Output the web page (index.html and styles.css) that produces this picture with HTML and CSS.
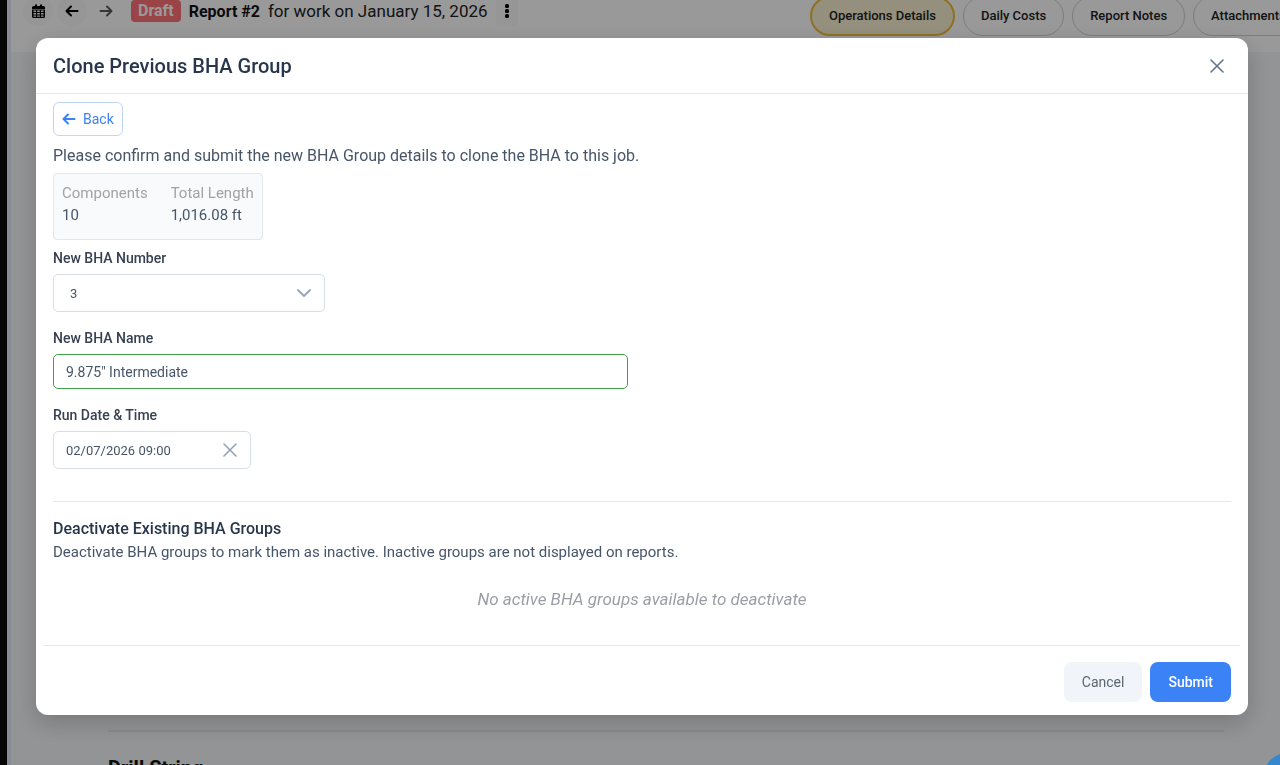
FILE: index.html
```
<!DOCTYPE html>
<html lang="en">
<head>
    <meta charset="UTF-8">
    <meta name="viewport" content="width=device-width, initial-scale=1.0">
    <title>Clone Previous BHA Group</title>
    <link rel="stylesheet" href="styles.css">
</head>
<body>
    <div class="page">
        <div class="sidebar"></div>

        <main class="content">
            <header class="topbar">
                <div class="report-nav">
                    <button type="button" class="icon-button" aria-label="Calendar">
                        <svg width="13" height="15" viewBox="0 0 13 15" fill="#000">
                            <path fill-rule="evenodd" d="M3 0.500h2V2h3V0.500h2V2h1.500A1.500 1.500 0 0 1 13 3.500V5H0V3.500A1.500 1.500 0 0 1 1.500 2H3zM0 5.500H13V12.500A1.500 1.500 0 0 1 11.500 14H1.500A1.500 1.500 0 0 1 0 12.500zM1.500 6.500V8H4V6.500zM5.200 6.500V8H7.800V6.500zM9 6.500V8H11.500V6.500zM1.500 9V10.500H4V9zM5.200 9V10.500H7.800V9zM9 9V10.500H11.500V9zM1.500 11.500V12.700H4V11.500zM5.200 11.500V12.700H7.800V11.500zM9 11.500V12.700H11.500V11.500z"/>
                        </svg>
                    </button>
                    <button type="button" class="icon-button" aria-label="Previous report">
                        <svg width="14" height="14" viewBox="0 0 14 14" fill="none" stroke="#000" stroke-width="2" stroke-linecap="round" stroke-linejoin="round">
                            <path d="M12.500 7H2M6 2.500L1.500 7 6 11.500"/>
                        </svg>
                    </button>
                    <button type="button" class="icon-button muted" aria-label="Next report">
                        <svg width="14" height="14" viewBox="0 0 14 14" fill="none" stroke="#5a5a5a" stroke-width="2" stroke-linecap="round" stroke-linejoin="round">
                            <path d="M1.500 7H12M8 2.500L12.500 7 8 11.500"/>
                        </svg>
                    </button>
                    <span class="badge">Draft</span>
                    <strong class="report-title">Report #2</strong>
                    <span class="report-date">for work on January 15, 2026</span>
                    <button type="button" class="icon-button more" aria-label="More">
                        <svg width="4" height="16" viewBox="0 0 4 16" fill="#000">
                            <rect x="0" y="1" width="4" height="4" rx="1.500"/>
                            <rect x="0" y="6" width="4" height="4" rx="1.500"/>
                            <rect x="0" y="11" width="4" height="4" rx="1.500"/>
                        </svg>
                    </button>
                </div>
                <nav class="tabs">
                    <a href="#operations" class="tab active">Operations Details</a>
                    <a href="#costs" class="tab">Daily Costs</a>
                    <a href="#notes" class="tab">Report Notes</a>
                    <a href="#attachments" class="tab">Attachments</a>
                </nav>
            </header>

            <section class="report-section">
                <h2>Drill String</h2>
            </section>
        </main>
    </div>

    <div class="overlay">
        <div class="modal" role="dialog" aria-labelledby="modalTitle">
            <div class="modal-header">
                <h1 id="modalTitle">Clone Previous BHA Group</h1>
                <button type="button" class="close-button" aria-label="Close">
                    <svg width="14" height="14" viewBox="0 0 14 14" fill="none" stroke="#64748b" stroke-width="1.600" stroke-linecap="round">
                        <path d="M1 1l12 12M13 1L1 13"/>
                    </svg>
                </button>
            </div>

            <form class="modal-form">
                <div class="modal-body">
                    <button type="button" class="back-button">
                        <svg width="14" height="14" viewBox="0 0 14 14" fill="none" stroke="#3b82f6" stroke-width="2" stroke-linecap="round" stroke-linejoin="round">
                            <path d="M12.500 7H2M6 2.500L1.500 7 6 11.500"/>
                        </svg>
                        Back
                    </button>

                    <p class="intro">Please confirm and submit the new BHA Group details to clone the BHA to this job.</p>

                    <dl class="summary">
                        <div>
                            <dt>Components</dt>
                            <dd>10</dd>
                        </div>
                        <div>
                            <dt>Total Length</dt>
                            <dd>1,016.08 ft</dd>
                        </div>
                    </dl>

                    <div class="form-group">
                        <label for="bhaNumber">New BHA Number</label>
                        <div class="select-box">
                            <select id="bhaNumber">
                                <option value="3" selected>3</option>
                                <option value="4">4</option>
                            </select>
                            <svg class="field-icon" width="14" height="8" viewBox="0 0 14 8" fill="none" stroke="#94a3b8" stroke-width="1.800" stroke-linecap="round" stroke-linejoin="round">
                                <path d="M1 1l6 6 6-6"/>
                            </svg>
                        </div>
                    </div>

                    <div class="form-group">
                        <label for="bhaName">New BHA Name</label>
                        <input type="text" id="bhaName" class="name-input" value="9.875&quot; Intermediate">
                    </div>

                    <div class="form-group">
                        <label for="runDate">Run Date &amp; Time</label>
                        <div class="date-box">
                            <input type="text" id="runDate" value="02/07/2026 09:00">
                            <button type="button" class="field-icon" aria-label="Clear date">
                                <svg width="14" height="14" viewBox="0 0 14 14" fill="none" stroke="#94a3b8" stroke-width="1.600" stroke-linecap="round">
                                    <path d="M1 1l12 12M13 1L1 13"/>
                                </svg>
                            </button>
                        </div>
                    </div>

                    <div class="deactivate">
                        <h2>Deactivate Existing BHA Groups</h2>
                        <p>Deactivate BHA groups to mark them as inactive. Inactive groups are not displayed on reports.</p>
                        <p class="empty">No active BHA groups available to deactivate</p>
                    </div>
                </div>

                <div class="modal-footer">
                    <button type="button" class="cancel-button">Cancel</button>
                    <button type="submit" class="submit-button">Submit</button>
                </div>
            </form>
        </div>
    </div>

    <button type="button" class="chat-button" aria-label="Chat"></button>
</body>
</html>
```

FILE: styles.css
```
* {
    box-sizing: border-box;
}

body {
    margin: 0;
    font-family: Roboto, "Liberation Sans", sans-serif;
    font-size: 16px;
    color: #475569;
    overflow: hidden;
}

h1, h2, p, dl, dd {
    margin: 0;
}

button, input, select {
    font-family: inherit;
}

button {
    padding: 0;
    border: none;
    cursor: pointer;
}

svg {
    display: block;
}

/* Page behind the modal */
.page {
    display: flex;
    height: 100vh;
    overflow: hidden;
}

.sidebar {
    flex: none;
    width: 7px;
    background-color: #0a0a0a;
}

.content {
    flex: 1;
    min-width: 0;
    display: flex;
    flex-direction: column;
    justify-content: space-between;
    border-left: 4px solid #e4ebf5;
    background-color: #f5f7fa;
}

.topbar {
    display: flex;
    justify-content: space-between;
    height: 52px;
    padding-left: 12px;
    background-color: #fff;
    overflow: hidden;
}

.report-nav {
    display: flex;
    align-items: center;
    height: 22px;
    color: #222;
    white-space: nowrap;
}

.icon-button {
    display: flex;
    align-items: center;
    justify-content: center;
    flex: none;
    width: 30px;
    height: 30px;
    margin-right: 4px;
    border-radius: 50%;
    background-color: #fafafa;
}

.icon-button.muted {
    background-color: transparent;
}

.icon-button.more {
    width: 22px;
    margin: 0 0 0 8px;
    border-radius: 4px;
}

.badge {
    height: 22px;
    margin: 0 8px 0 6px;
    padding: 0 7px;
    border-radius: 4px;
    background-color: #ff7276;
    color: #fff;
    font-weight: bold;
    line-height: 22px;
}

.report-title {
    margin-right: 8px;
    color: #111;
}

.report-date {
    font-size: 17px;
}

.tabs {
    display: flex;
    gap: 8px;
    width: 470px;
    margin-top: -4px;
}

.tab {
    flex: none;
    height: 40px;
    padding: 0 17px;
    border: 1px solid #d0d0d0;
    border-radius: 20px;
    color: #222;
    font-size: 13px;
    font-weight: 500;
    line-height: 38px;
    text-decoration: none;
}

.tab.active {
    border: 2px solid #f0bc38;
    background-color: #f8efd0;
    line-height: 36px;
}

.report-section {
    height: 35px;
    margin: 0 56px 0 97px;
    border-top: 2px solid #e4e6e9;
    overflow: hidden;
}

.report-section h2 {
    padding-top: 24px;
    color: #111;
    font-size: 20px;
    line-height: 24px;
}

.chat-button {
    position: fixed;
    right: -38px;
    bottom: -43px;
    width: 56px;
    height: 56px;
    border-radius: 50%;
    background-color: #3588d0;
}

/* Modal */
.overlay {
    position: fixed;
    inset: 0;
    display: flex;
    align-items: flex-start;
    padding: 38px 32px 0 36px;
    background-color: rgba(0, 0, 0, 0.4);
}

.modal {
    flex: 1;
    min-width: 0;
    border-radius: 12px;
    background-color: #fff;
    box-shadow: 0 8px 24px rgba(0, 0, 0, 0.2);
}

.modal-header {
    display: flex;
    align-items: center;
    justify-content: space-between;
    height: 56px;
    padding: 0 24px 0 17px;
    border-bottom: 1px solid #e5e7eb;
}

.modal-header h1 {
    color: #27364b;
    font-size: 20px;
    font-weight: 500;
}

.close-button {
    background: none;
}

.modal-body {
    padding: 8px 17px 0;
}

.back-button {
    display: flex;
    align-items: center;
    gap: 7px;
    height: 34px;
    padding: 0 8px;
    border: 1px solid #bfd5fb;
    border-radius: 6px;
    background-color: #fff;
    color: #3b82f6;
    font-size: 14px;
}

.intro {
    margin-top: 8px;
    line-height: 24px;
}

.summary {
    display: flex;
    gap: 23px;
    width: fit-content;
    height: 67px;
    margin-top: 5px;
    padding: 8px;
    border: 1px solid #e2e5ea;
    border-radius: 4px;
    background-color: #f8fafc;
    font-size: 15px;
    line-height: 22px;
}

.summary dt {
    color: #a0a3a8;
}

.form-group label {
    display: block;
    margin-bottom: 6px;
    color: #374151;
    font-size: 14px;
    font-weight: 500;
    line-height: 20px;
}

.summary + .form-group {
    margin-top: 8px;
}

.form-group + .form-group {
    margin-top: 16px;
}

.form-group input, .form-group select {
    display: block;
    width: 100%;
    height: 38px;
    padding: 0 12px;
    border: 1px solid #d8dee6;
    border-radius: 5px;
    background-color: #fff;
    color: #475569;
    font-size: 13px;
}

.form-group select {
    padding: 0 16px;
    appearance: none;
}

.form-group .name-input {
    width: 575px;
    max-width: 100%;
    height: 35px;
    border-color: #43a047;
    font-size: 14px;
}

.select-box, .date-box {
    position: relative;
    width: 272px;
}

.date-box {
    width: 198px;
}

.field-icon {
    position: absolute;
    top: 0;
    right: 14px;
    height: 38px;
    background: none;
    pointer-events: none;
}

.deactivate {
    margin-top: 32px;
    padding-top: 17px;
    border-top: 1px solid #e5e7eb;
}

.deactivate h2 {
    color: #27364b;
    font-size: 16px;
    font-weight: 500;
    line-height: 20px;
}

.deactivate p {
    margin-top: 3px;
    font-size: 15px;
    line-height: 20px;
}

.deactivate .empty {
    margin-top: 25px;
    color: #9b9fa5;
    font-size: 17px;
    font-style: italic;
    line-height: 24px;
    text-align: center;
}

.modal-footer {
    display: flex;
    justify-content: flex-end;
    gap: 8px;
    margin: 34px 8px 0;
    padding: 16px 9px 13px;
    border-top: 1px solid #e5e7eb;
}

.modal-footer button {
    height: 40px;
    padding: 0 18px;
    border-radius: 8px;
    font-size: 14px;
}

.modal-footer .cancel-button {
    background-color: #f1f5f9;
    color: #596674;
}

.modal-footer .submit-button {
    background-color: #3b82f6;
    color: #fff;
    font-weight: 500;
}
```
